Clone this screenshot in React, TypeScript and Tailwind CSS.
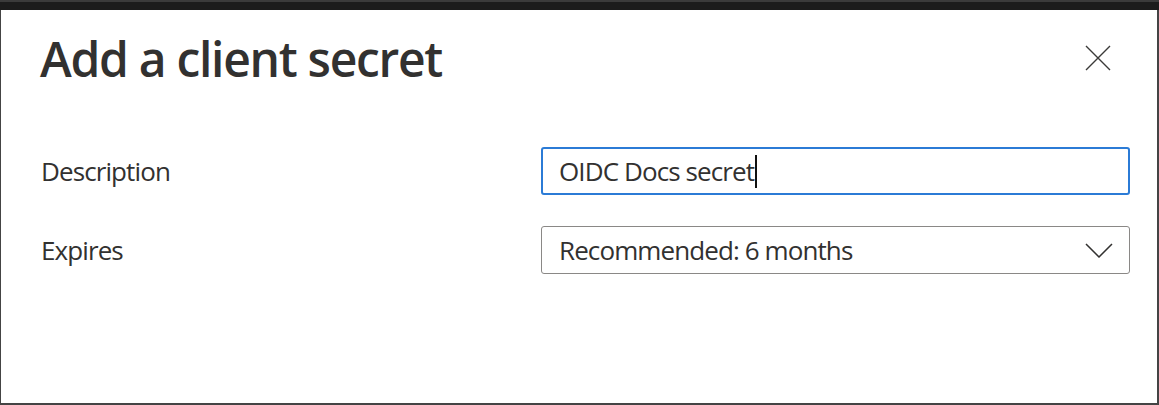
import React from "react"

const font = { fontFamily: '"Open Sans", "Noto Sans", "Liberation Sans", sans-serif' }

function CloseIcon() {
  return (
    <svg width="26" height="26" viewBox="0 0 26 26" fill="none" stroke="#3b3a39" strokeWidth="1.4">
      <path d="M1 1 L25 25 M25 1 L1 25" />
    </svg>
  )
}

function Chevron() {
  return (
    <svg width="28" height="15" viewBox="0 0 28 15" fill="none" stroke="#323130" strokeWidth="1.5">
      <path d="M1 1 L14 14 L27 1" />
    </svg>
  )
}

export default function App() {
  return (
    <div className="w-[1159px] h-[405px] flex flex-col bg-[#1c1c1c] text-[#323130]" style={font}>
      <div className="h-[2px] bg-[#3b3b3b]" />
      <div className="h-[8px]" />
      <div className="flex-1 bg-white border-l border-r-2 border-b-2 border-[#444444] pl-[39px] pr-[27px]">
        <div className="flex items-start justify-between pt-[17px]">
          <h1 className="text-[48px] leading-[64px] font-semibold tracking-[-1.3px]">Add a client secret</h1>
          <button className="w-[48px] h-[48px] mt-[7px] mr-[8px] flex items-center justify-center" aria-label="Close">
            <CloseIcon />
          </button>
        </div>

        <div className="mt-[56px] flex flex-col gap-[31px] text-[26px] tracking-[-0.9px]">
          <div className="flex items-center">
            <label className="w-[501px] pl-[1px]">Description</label>
            <div className="flex-1 h-[48px] border-2 border-[#2b7bd6] rounded-[3px] pl-[16px] flex items-center">
              <span className="leading-[44px]">OIDC Docs secret</span>
              <span className="w-[2px] h-[33px] bg-[#111] ml-[1px]" />
            </div>
          </div>
          <div className="flex items-center">
            <label className="w-[501px] pl-[1px]">Expires</label>
            <div className="flex-1 h-[48px] border border-[#8a8886] rounded-[3px] pl-[17px] pr-[16px] flex items-center justify-between">
              <span className="leading-[46px]">Recommended: 6 months</span>
              <Chevron />
            </div>
          </div>
        </div>
      </div>
    </div>
  )
}
